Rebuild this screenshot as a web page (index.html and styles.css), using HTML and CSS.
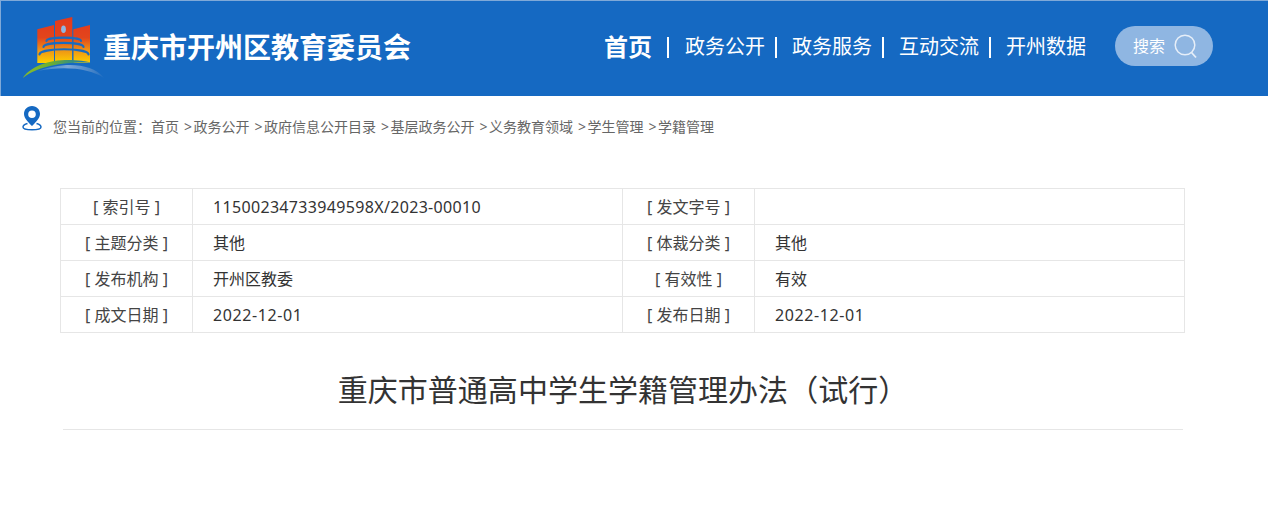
FILE: index.html
```html
<!DOCTYPE html>
<html lang="zh-CN">
<head>
<meta charset="utf-8">
<title>重庆市开州区教育委员会</title>
<link rel="stylesheet" href="styles.css">
</head>
<body>
<header class="header">
  <div class="brand">
    <svg class="logo" width="82" height="62" viewBox="0 0 82 62">
      <defs>
        <linearGradient id="lg" gradientUnits="userSpaceOnUse" x1="0" y1="0" x2="0" y2="46">
          <stop offset="0" stop-color="#e2391c"/>
          <stop offset="0.45" stop-color="#e2451c"/>
          <stop offset="0.72" stop-color="#ee9316"/>
          <stop offset="1" stop-color="#fdd000"/>
        </linearGradient>
        <linearGradient id="ar" gradientUnits="userSpaceOnUse" x1="0" y1="0" x2="70" y2="0">
          <stop offset="0" stop-color="#86bc2c"/>
          <stop offset="0.4" stop-color="#6cae33"/>
          <stop offset="0.75" stop-color="#2f8a8c"/>
          <stop offset="1" stop-color="#1569c2"/>
        </linearGradient>
        <linearGradient id="ar2" gradientUnits="userSpaceOnUse" x1="15" y1="0" x2="81" y2="0">
          <stop offset="0" stop-color="#2f7cc8"/>
          <stop offset="0.45" stop-color="#7ba6d6"/>
          <stop offset="0.8" stop-color="#4a86c8"/>
          <stop offset="1" stop-color="#1f6dc2"/>
        </linearGradient>
      </defs>
      <path fill="url(#lg)" d="M14.300 12.300 L31 8 V46 H14.300 Z M32 4 L49.300 0 V46 H32 Z M50.300 12.300 L67 8 V46 H50.300 Z"/>
      <ellipse cx="40.500" cy="12.300" rx="2.400" ry="3.800" fill="#8fb6e2"/>
      <path fill="none" stroke="#1a6bbf" stroke-width="2.200" stroke-linecap="round" d="M23.500 24 C23.500 19.500 58 19.500 58 24 M20.500 30 C20.500 24.500 60.500 24.500 60.500 30 M16.500 37.500 C16.500 30.500 65.500 30.500 65.500 37.500"/>
      <path fill="none" stroke="#1a6bbf" stroke-width="1" d="M31.500 20 V46 M49.800 20 V46"/>
      <path fill="url(#ar)" d="M0 61 C5 52 22 43.500 42 43 C54 42.800 62 44 70 46 C50 44.500 18 47 0 61 Z"/>
      <path fill="url(#ar2)" d="M15 54 C36 46 68 44 81 61 C66 51 40 49 15 54 Z"/>
    </svg>
    <h1 class="site-name">重庆市开州区教育委员会</h1>
  </div>
  <nav class="nav">
    <a class="nav-home">首页</a><span class="sep sep-first"></span>
    <a class="nav-item">政务公开</a><span class="sep"></span>
    <a class="nav-item">政务服务</a><span class="sep"></span>
    <a class="nav-item">互动交流</a><span class="sep"></span>
    <a class="nav-item">开州数据</a>
  </nav>
  <div class="search">
    <span class="search-label">搜索</span>
    <svg class="search-icon" width="24" height="26" viewBox="0 0 24 26">
      <circle cx="11" cy="11" r="9.800" fill="none" stroke="#e6eef8" stroke-width="1.500"/>
      <path d="M17.500 18.500 L22 23.500" stroke="#e6eef8" stroke-width="1.800" fill="none"/>
    </svg>
  </div>
</header>
<div class="crumbs">
  <svg class="pin" width="20" height="25" viewBox="0 0 20 25">
    <path fill="#1569c2" fill-rule="evenodd" d="M10 0 C5 0 2 3.800 2 8 C2 12.200 6.500 16.500 10 20 C13.500 16.500 18 12.200 18 8 C18 3.800 15 0 10 0 Z M10 4.400 A3.800 3.800 0 1 1 10 12 A3.800 3.800 0 1 1 10 4.400 Z"/>
    <path fill="none" stroke="#1569c2" stroke-width="1.500" d="M5.500 17.500 C2 18.500 1 19.700 1 21 C1 22.800 4.500 23.800 10 23.800 C15.500 23.800 19 22.800 19 21 C19 19.700 18 18.500 14.500 17.500"/>
  </svg>
  <p class="crumb-text"><span>您当前的位置：</span><a>首页</a><a class="c2"><span class="gt">&gt;</span>政务公开</a><a class="c2"><span class="gt">&gt;</span>政府信息公开目录</a><a class="c2"><span class="gt">&gt;</span>基层政务公开</a><a class="c2"><span class="gt">&gt;</span>义务教育领域</a><a class="c2"><span class="gt">&gt;</span>学生管理</a><a class="c2"><span class="gt">&gt;</span>学籍管理</a></p>
</div>
<main class="content">
  <table class="meta">
    <tr><th>[ 索引号 ]</th><td><span class="num">11500234733949598X/2023-00010</span></td><th>[ 发文字号 ]</th><td></td></tr>
    <tr><th>[ 主题分类 ]</th><td>其他</td><th>[ 体裁分类 ]</th><td>其他</td></tr>
    <tr><th>[ 发布机构 ]</th><td>开州区教委</td><th>[ 有效性 ]</th><td>有效</td></tr>
    <tr><th>[ 成文日期 ]</th><td><span class="num date">2022-12-01</span></td><th>[ 发布日期 ]</th><td><span class="num date">2022-12-01</span></td></tr>
  </table>
  <h2 class="title">重庆市普通高中学生学籍管理办法（试行）</h2>
</main>
</body>
</html>
```
FILE: styles.css
```css
* { box-sizing: border-box; }
html, body { margin: 0; padding: 0; background: #fff; }
body {
  height: 515px;
  overflow: hidden;
  font-family: "Noto Sans", "Noto Sans CJK SC", sans-serif;
  color: #333;
}
.header {
  height: 96px;
  background: #1569c2;
  border-top: 1px solid #7fa9d8;
  border-left: 1px solid #7fa9d8;
  display: flex;
  align-items: center;
  padding: 0 0 1px 22px;
}
.brand { display: flex; align-items: center; width: 581px; }
.logo { margin-top: -1px; flex: none; }
.site-name {
  margin: -2px 0 0 -2px;
  font-size: 28px;
  line-height: 36px;
  font-weight: 700;
  color: #fff;
  white-space: nowrap;
}
.nav { display: flex; align-items: center; color: #fff; width: 511px; margin-top: -2px; }
.nav-home { font-size: 24px; font-weight: 700; line-height: 30px; }
.nav-item { font-size: 20px; line-height: 30px; }
.sep { width: 2px; height: 21px; background: #fff; margin: 0 15px 0 10px; }
.sep-first { margin: 0 16px 0 15px; }
.search {
  width: 98px;
  height: 40px;
  border-radius: 20px;
  background: #8fb6e2;
  display: flex;
  align-items: center;
  padding-left: 18px;
  color: #fff;
  margin-top: -4px;
}
.search-label { font-size: 16px; line-height: 24px; }
.search-icon { margin-left: 9px; margin-top: 2px; }
.crumbs { height: 92px; padding: 10px 0 0 22px; display: flex; align-items: flex-start; }
.pin { flex: none; }
.crumb-text {
  margin: 11px 0 0 11px;
  font-size: 14px;
  line-height: 20px;
  color: #666;
  white-space: nowrap;
}
.c2 { margin-left: 5px; }
.gt { margin-right: 1.5px; }
.content { padding: 0 83px 0 60px; }
.meta {
  width: 1125px;
  table-layout: fixed;
  border-collapse: collapse;
  font-size: 16px;
  color: #333;
}
.meta th, .meta td {
  border: 1px solid #e6e6e6;
  height: 36px;
  padding: 0 0 1px;
  font-weight: 400;
}
.meta th { width: 132px; text-align: center; color: #444; }
.meta td { width: 430px; padding-left: 20px; }
.num { letter-spacing: 0.33px; position: relative; top: 1px; }
.date { letter-spacing: 0.6px; }
.title {
  width: 1120px;
  margin: 22px 0 0 3px;
  height: 75px;
  border-bottom: 1px solid #e6e6e6;
  text-align: center;
  font-size: 30px;
  font-weight: 400;
  line-height: 70px;
  letter-spacing: 0.03px;
  color: #333;
}
```
